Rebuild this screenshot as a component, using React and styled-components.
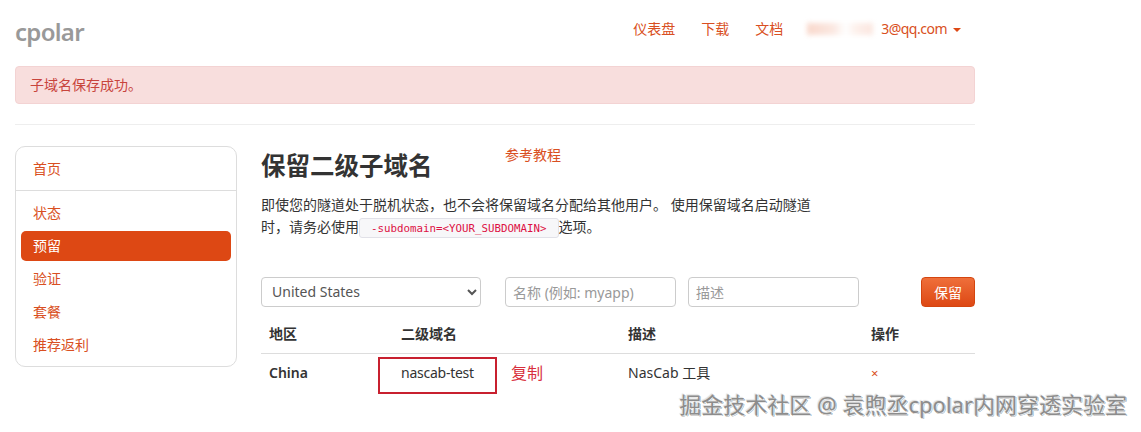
import React from "react";
import styled, { createGlobalStyle } from "styled-components";

const sans = `"Noto Sans", "Noto Sans CJK SC", sans-serif`;

const GlobalStyle = createGlobalStyle`
  html, body {
    margin: 0;
    padding: 0;
    background: #fff;
  }
  body {
    font-family: ${sans};
    font-size: 14px;
    line-height: 20px;
    color: #333;
  }
`;

const Page = styled.div`
  position: relative;
  width: 1141px;
  height: 432px;
  overflow: hidden;
`;

const Container = styled.div`
  width: 960px;
  margin-left: 15px;
`;

const Header = styled.header`
  display: flex;
  align-items: center;
  justify-content: space-between;
  height: 66px;
`;

const Logo = styled.div`
  font-size: 24px;
  font-weight: 600;
  letter-spacing: -0.7px;
  color: #999;
  margin-top: -2px;
`;

const Nav = styled.nav`
  display: flex;
  align-items: center;
  gap: 26px;
  padding-right: 14px;
  margin-top: -9px;
`;

const Link = styled.a`
  color: #d94f22;
  text-decoration: none;
`;

const User = styled(Link)`
  display: flex;
  align-items: center;
  margin-left: -2px;
  letter-spacing: -0.5px;
`;

const Smear = styled.span`
  width: 66px;
  height: 12px;
  margin-right: 8px;
  background: linear-gradient(90deg, #f9d8cc 0%, #fbe8e1 40%, #fff 58%, #fdf0eb 75%, #fbe6df 100%);
  filter: blur(2.5px);
`;

const Caret = styled.span`
  width: 0;
  height: 0;
  margin-left: 6px;
  margin-top: 2px;
  border-left: 4px solid transparent;
  border-right: 4px solid transparent;
  border-top: 4px solid #dd4814;
`;

const Alert = styled.div`
  box-sizing: border-box;
  height: 38px;
  padding: 8px 14px;
  background: #f8dedd;
  border: 1px solid #f3d3d3;
  border-radius: 4px;
  color: #c8443c;
`;

const Rule = styled.hr`
  margin: 20px 0 21px;
  border: 0;
  border-top: 1px solid #eee;
`;

const Columns = styled.div`
  display: flex;
  gap: 24px;
  align-items: flex-start;
`;

const Sidebar = styled.ul`
  box-sizing: border-box;
  width: 222px;
  height: 221px;
  margin: 0;
  padding: 0 5px;
  list-style: none;
  background: #fff;
  border: 1px solid #ddd;
  border-radius: 10px;
`;

const SideItem = styled.li`
  display: flex;
  align-items: center;
  height: 30px;
  margin-bottom: 3px;
  padding-left: 12px;
  border-radius: 5px;
  color: ${({ $active }) => ($active ? "#fff" : "#d94f22")};
  background: ${({ $active }) => ($active ? "#dd4814" : "transparent")};
`;

const SideHome = styled(SideItem)`
  height: 43px;
  margin: 0 -5px 7px;
  padding-left: 17px;
  border-bottom: 1px solid #ddd;
  border-radius: 0;
`;

const Main = styled.main`
  width: 714px;
`;

const TitleRow = styled.div`
  display: flex;
  align-items: flex-start;
  height: 48px;
`;

const Title = styled.h2`
  width: 244px;
  margin: 4px 0 0;
  font-size: 24.5px;
  line-height: 32px;
  font-weight: 700;
`;

const TutorialLink = styled(Link)`
  margin-top: -1px;
`;

const Intro = styled.p`
  width: 556px;
  margin: 0;
  line-height: 22px;
`;

const Code = styled.code`
  display: inline-block;
  box-sizing: border-box;
  height: 20px;
  padding: 0 11px;
  font-family: "DejaVu Sans Mono", monospace;
  font-size: 10.8px;
  line-height: 19px;
  color: #d14;
  background: #f7f7f9;
  border: 1px solid #e1e1e8;
  border-radius: 3px;
  vertical-align: 0;
`;

const Form = styled.form`
  display: flex;
  align-items: center;
  margin-top: 39px;
`;

const Select = styled.select`
  box-sizing: border-box;
  width: 220px;
  height: 30px;
  margin-right: 24px;
  padding: 0 6px 2px;
  font-family: ${sans};
  font-size: 14px;
  color: #555;
  background: #fff;
  border: 1px solid #ccc;
  border-radius: 4px;
`;

const Input = styled.input`
  box-sizing: border-box;
  width: 171px;
  height: 30px;
  margin-right: 12px;
  padding: 0 7px;
  font-family: ${sans};
  font-size: 14px;
  background: #fff;
  border: 1px solid #ccc;
  border-radius: 4px;
  &::placeholder {
    color: #999;
    opacity: 1;
  }
`;

const SaveButton = styled.button`
  box-sizing: border-box;
  width: 54px;
  height: 30px;
  margin-left: auto;
  padding: 0;
  font-family: ${sans};
  font-size: 14px;
  color: #fff;
  background: linear-gradient(#ef6f3a, #dd4814);
  border: 1px solid #d4450f;
  border-radius: 4px;
`;

const Table = styled.table`
  width: 714px;
  margin-top: 8px;
  border-collapse: collapse;
  table-layout: fixed;
`;

const Th = styled.th`
  box-sizing: border-box;
  height: 38px;
  padding: 1px 8px 0;
  text-align: left;
  font-weight: 600;
  border-bottom: 1px solid #ddd;
  width: ${({ $w }) => $w}px;
`;

const Td = styled.td`
  position: relative;
  height: 38px;
  padding: 0 8px;
  font-weight: ${({ $strong }) => ($strong ? 600 : 400)};
`;

const DomainName = styled.span`
  letter-spacing: -0.25px;
`;

const Remove = styled(Link)`
  font-size: 13px;
`;

const Highlight = styled.span`
  position: absolute;
  left: -15px;
  top: 3px;
  width: 119px;
  height: 37px;
  box-sizing: border-box;
  border: 2px solid #c8202f;
`;

const CopyNote = styled.span`
  position: absolute;
  left: 118px;
  top: 9px;
  font-size: 16px;
  color: #d8303c;
`;

const Watermark = styled.div`
  position: absolute;
  right: 14px;
  top: 391px;
  font-size: 22px;
  line-height: 26px;
  white-space: nowrap;
  color: #8c8c8c;
  text-shadow: 1px 1px 1px #fff, -1px -1px 1px #ddd, 1px 1px 0 #555;
`;

const sideLinks = [
  { label: "状态" },
  { label: "预留", active: true },
  { label: "验证" },
  { label: "套餐" },
  { label: "推荐返利" },
];

export default function App() {
  return (
    <Page>
      <GlobalStyle />
      <Container>
        <Header>
          <Logo>cpolar</Logo>
          <Nav>
            <Link>仪表盘</Link>
            <Link>下载</Link>
            <Link>文档</Link>
            <User>
              <Smear />
              3@qq.com
              <Caret />
            </User>
          </Nav>
        </Header>
        <Alert>子域名保存成功。</Alert>
        <Rule />
        <Columns>
          <Sidebar>
            <SideHome>首页</SideHome>
            {sideLinks.map((item) => (
              <SideItem key={item.label} $active={item.active}>
                {item.label}
              </SideItem>
            ))}
          </Sidebar>
          <Main>
            <TitleRow>
              <Title>保留二级子域名</Title>
              <TutorialLink>参考教程</TutorialLink>
            </TitleRow>
            <Intro>
              即使您的隧道处于脱机状态，也不会将保留域名分配给其他用户。 使用保留域名启动隧道时，请务必使用
              <Code>-subdomain=&lt;YOUR_SUBDOMAIN&gt;</Code>
              选项。
            </Intro>
            <Form>
              <Select defaultValue="us">
                <option value="us">United States</option>
              </Select>
              <Input placeholder="名称 (例如: myapp)" />
              <Input placeholder="描述" />
              <SaveButton type="button">保留</SaveButton>
            </Form>
            <Table>
              <thead>
                <tr>
                  <Th $w={132}>地区</Th>
                  <Th $w={227}>二级域名</Th>
                  <Th $w={243}>描述</Th>
                  <Th $w={112}>操作</Th>
                </tr>
              </thead>
              <tbody>
                <tr>
                  <Td $strong>China</Td>
                  <Td>
                    <DomainName>nascab-test</DomainName>
                    <Highlight />
                    <CopyNote>复制</CopyNote>
                  </Td>
                  <Td>NasCab 工具</Td>
                  <Td>
                    <Remove>×</Remove>
                  </Td>
                </tr>
              </tbody>
            </Table>
          </Main>
        </Columns>
      </Container>
      <Watermark>掘金技术社区 @ 袁煦丞cpolar内网穿透实验室</Watermark>
    </Page>
  );
}
